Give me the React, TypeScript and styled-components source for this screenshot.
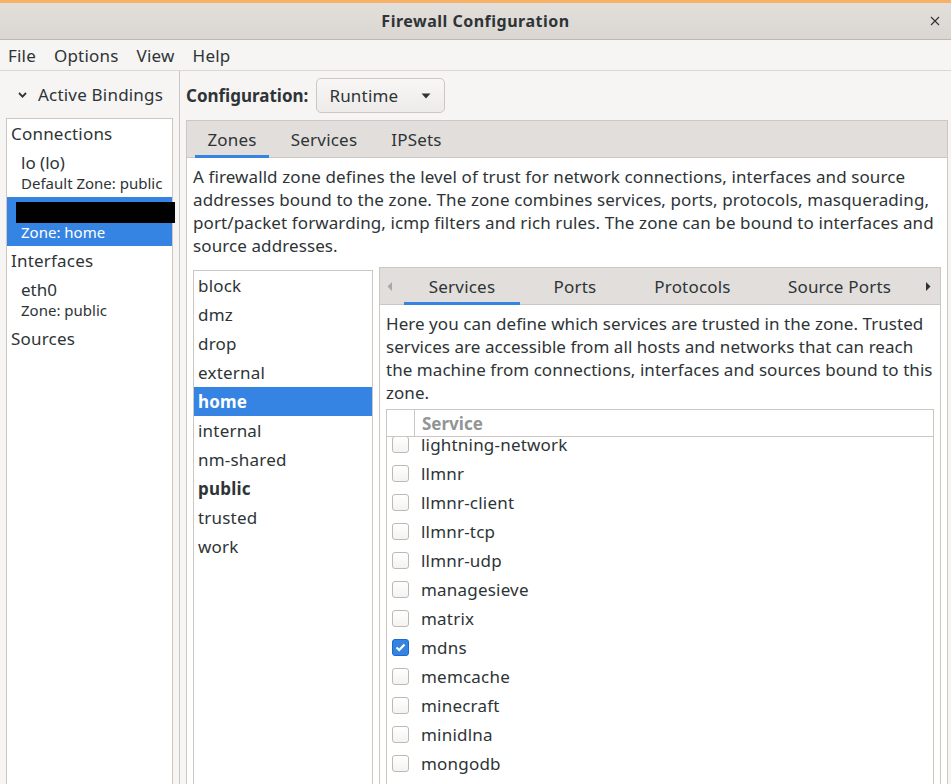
import styled, { createGlobalStyle } from "styled-components";

const GlobalStyle = createGlobalStyle`
  html, body {
    margin: 0;
    padding: 0;
  }
  body {
    background: #f6f5f4;
    font-family: "Noto Sans", "DejaVu Sans", sans-serif;
    font-size: 16px;
    color: #2e3436;
    overflow: hidden;
  }
`;

const blue = "#3584e4";
const border = "#cdc7c2";

const Window = styled.div`
  height: 784px;
  display: flex;
  flex-direction: column;
  overflow: hidden;
`;

const TopAccent = styled.div`
  height: 3px;
  background: #f8b166;
  flex: none;
`;

const TitleBar = styled.div`
  height: 36px;
  flex: none;
  display: grid;
  grid-template-columns: 1fr auto 1fr;
  align-items: center;
  background: linear-gradient(#e2dfdb, #dad6d2);
  border-bottom: 1px solid #bfb8b1;
`;

const Title = styled.div`
  grid-column: 2;
  font-weight: bold;
  font-size: 16px;
  letter-spacing: 0.5px;
`;

const CloseButton = styled.div`
  justify-self: end;
  margin-right: 10px;
  width: 12px;
  height: 12px;
  display: flex;
`;

const MenuBar = styled.div`
  height: 30px;
  flex: none;
  display: flex;
  align-items: center;
  padding-left: 8px;
  gap: 18px;
  border-bottom: 1px solid #dcd8d4;
  font-size: 17px;
  letter-spacing: 0.2px;
`;

const MenuItem = styled.span``;

const Main = styled.div`
  flex: 1;
  min-height: 0;
  display: flex;
`;

const Sidebar = styled.div`
  width: 179px;
  flex: none;
  border-right: 1px solid ${border};
  display: flex;
  flex-direction: column;
`;

const Expander = styled.div`
  height: 47px;
  display: flex;
  align-items: center;
  padding-left: 18px;
  gap: 11px;
  font-size: 17px;
  letter-spacing: 0.2px;
`;

const BindingsBox = styled.div`
  flex: 1;
  margin: 0 6px 0 6px;
  background: #fff;
  border: 1px solid ${border};
  border-bottom: none;
`;

const BindingHeader = styled.div`
  height: 29px;
  display: flex;
  align-items: center;
  padding-left: 4px;
  font-size: 17px;
  letter-spacing: 0.2px;
`;

const BindingItem = styled.div<{ $selected?: boolean }>`
  height: 49px;
  padding: 4px 0 3px 14px;
  box-sizing: border-box;
  background: ${(p) => (p.$selected ? blue : "transparent")};
  color: ${(p) => (p.$selected ? "#fff" : "inherit")};
  display: flex;
  flex-direction: column;
`;

const BindingName = styled.div`
  height: 21px;
  line-height: 21px;
  font-size: 17px;
`;

const BindingZone = styled.div`
  height: 21px;
  line-height: 21px;
  font-size: 15px;
`;

const Redacted = styled.div`
  width: 159px;
  height: 21px;
  margin: 1px 0 -1px -5px;
  background: #000;
  position: relative;
`;

const Content = styled.div`
  flex: 1;
  min-width: 0;
  display: flex;
  flex-direction: column;
  padding: 7px 3px 0 6px;
`;

const ConfigRow = styled.div`
  height: 35px;
  display: flex;
  align-items: center;
  gap: 8px;
  margin-bottom: 7px;
`;

const ConfigLabel = styled.span`
  font-weight: bold;
  font-size: 17px;
`;

const Dropdown = styled.div`
  width: 129px;
  height: 35px;
  box-sizing: border-box;
  border: 1px solid ${border};
  border-radius: 5px;
  background: linear-gradient(#f8f7f6, #edebe9);
  display: flex;
  align-items: center;
  justify-content: space-between;
  padding: 0 13px 0 12px;
  font-size: 17px;
  letter-spacing: 0.2px;
`;

const Notebook = styled.div`
  flex: 1;
  min-height: 0;
  min-width: 0;
  display: flex;
  flex-direction: column;
  border: 1px solid ${border};
  border-bottom: none;
  background: #fff;
`;

const TabBar = styled.div<{ $inset: number }>`
  height: 36px;
  flex: none;
  display: flex;
  align-items: stretch;
  gap: 9px;
  padding-left: ${(p) => p.$inset}px;
  background: #e1dedb;
  border-bottom: 1px solid ${border};
`;

const Tab = styled.div<{ $width: number; $active?: boolean }>`
  width: ${(p) => p.$width}px;
  flex: none;
  display: flex;
  align-items: center;
  justify-content: center;
  font-size: 17px;
  letter-spacing: 0.2px;
  box-sizing: border-box;
  border-bottom: 3px solid ${(p) => (p.$active ? blue : "transparent")};
  padding-top: 3px;
  margin-bottom: -1px;
`;

const ScrollArrow = styled.div<{ $enabled?: boolean }>`
  width: 10px;
  display: flex;
  align-items: center;
  justify-content: center;
  color: ${(p) => (p.$enabled ? "#2e3436" : "#a5a9aa")};
`;

const NotebookBody = styled.div`
  flex: 1;
  min-height: 0;
  display: flex;
  flex-direction: column;
  padding: 7px 6px 0;
`;

const Description = styled.p<{ $tracking: number }>`
  margin: 0;
  font-size: 17px;
  line-height: 23px;
  letter-spacing: ${(p) => p.$tracking}px;
  white-space: nowrap;
`;

const ZonePane = styled.div`
  flex: 1;
  min-height: 0;
  display: flex;
  gap: 6px;
  margin-top: 10px;
`;

const ZoneList = styled.div`
  width: 180px;
  flex: none;
  box-sizing: border-box;
  margin-top: 3px;
  border: 1px solid ${border};
  border-bottom: none;
  background: #fff;
`;

const ZoneRow = styled.div<{ $selected?: boolean; $bold?: boolean }>`
  height: 29px;
  display: flex;
  align-items: center;
  padding-left: 4px;
  font-size: 17px;
  letter-spacing: 0.2px;
  font-weight: ${(p) => (p.$selected || p.$bold ? "bold" : "normal")};
  background: ${(p) => (p.$selected ? blue : "transparent")};
  color: ${(p) => (p.$selected ? "#fff" : "inherit")};
`;

const InnerNotebook = styled(Notebook)``;

const ServiceTree = styled.div`
  flex: 1;
  min-height: 0;
  margin-top: 5px;
  border: 1px solid ${border};
  border-bottom: none;
  display: flex;
  flex-direction: column;
`;

const TreeHeader = styled.div`
  height: 26px;
  flex: none;
  display: grid;
  grid-template-columns: 28px 1fr;
  border-bottom: 1px solid ${border};
  position: relative;
  z-index: 1;
  background: #fff;
`;

const HeaderCell = styled.div<{ $divider?: boolean }>`
  display: flex;
  align-items: center;
  padding-left: 7px;
  font-weight: bold;
  font-size: 17px;
  color: #929595;
  border-right: ${(p) => (p.$divider ? `1px solid ${border}` : "none")};
`;

const TreeBody = styled.div`
  flex: 1;
  overflow: hidden;
`;

const TreeRows = styled.div`
  margin-top: -7px;
`;

const ServiceRow = styled.div`
  height: 29px;
  display: grid;
  grid-template-columns: 29px 1fr;
  align-items: center;
  font-size: 17px;
  letter-spacing: 0.2px;
`;

const CheckBox = styled.div<{ $checked?: boolean }>`
  width: 17px;
  height: 17px;
  box-sizing: border-box;
  margin-left: 5px;
  border-radius: 3px;
  border: 1px solid ${(p) => (p.$checked ? "#1b6acb" : "#bfb9b3")};
  background: ${(p) => (p.$checked ? blue : "linear-gradient(#ffffff, #f4f3f2)")};
  display: flex;
  align-items: center;
  justify-content: center;
`;

const ServiceName = styled.span`
  padding-left: 5px;
`;

const zones = ["block", "dmz", "drop", "external", "home", "internal", "nm-shared", "public", "trusted", "work"];

const services = [
  "lightning-network",
  "llmnr",
  "llmnr-client",
  "llmnr-tcp",
  "llmnr-udp",
  "managesieve",
  "matrix",
  "mdns",
  "memcache",
  "minecraft",
  "minidlna",
  "mongodb",
  "mosh",
];

const outerTabs = [
  { label: "Zones", width: 74 },
  { label: "Services", width: 92 },
  { label: "IPSets", width: 75 },
];

const innerTabs = [
  { label: "Services", width: 116 },
  { label: "Ports", width: 92 },
  { label: "Protocols", width: 125 },
  { label: "Source Ports", width: 151 },
];

function Chevron() {
  return (
    <svg width="9" height="6" viewBox="0 0 9 6">
      <polyline points="1,1 4.5,4.6 8,1" fill="none" stroke="#2e3436" strokeWidth="1.8" />
    </svg>
  );
}

function Triangle({ dir }: { dir: "left" | "right" | "down" }) {
  if (dir === "down") {
    return (
      <svg width="10" height="6" viewBox="0 0 10 6">
        <polygon points="0.5,0.5 9.5,0.5 5,5.5" fill="#2e3436" />
      </svg>
    );
  }
  const pts = dir === "left" ? "5,0 5,9 0.5,4.5" : "0,0 0,9 4.5,4.5";
  return (
    <svg width="6" height="9" viewBox="0 0 6 9">
      <polygon points={pts} fill="currentColor" />
    </svg>
  );
}

function Check() {
  return (
    <svg width="11" height="9" viewBox="0 0 11 9">
      <polyline points="1.5,4.5 4.2,7 9.5,1.5" fill="none" stroke="#fff" strokeWidth="2.2" />
    </svg>
  );
}

export default function App() {
  return (
    <>
      <GlobalStyle />
      <Window>
        <TopAccent />
        <TitleBar>
          <Title>Firewall Configuration</Title>
          <CloseButton>
            <svg width="12" height="12" viewBox="0 0 12 12">
              <path d="M2 2 L10 10 M10 2 L2 10" stroke="#2e3436" strokeWidth="1.1" />
            </svg>
          </CloseButton>
        </TitleBar>
        <MenuBar>
          <MenuItem>File</MenuItem>
          <MenuItem>Options</MenuItem>
          <MenuItem>View</MenuItem>
          <MenuItem>Help</MenuItem>
        </MenuBar>
        <Main>
          <Sidebar>
            <Expander>
              <Chevron />
              <span>Active Bindings</span>
            </Expander>
            <BindingsBox>
              <BindingHeader>Connections</BindingHeader>
              <BindingItem>
                <BindingName>lo (lo)</BindingName>
                <BindingZone>Default Zone: public</BindingZone>
              </BindingItem>
              <BindingItem $selected>
                <Redacted />
                <BindingZone>Zone: home</BindingZone>
              </BindingItem>
              <BindingHeader>Interfaces</BindingHeader>
              <BindingItem>
                <BindingName>eth0</BindingName>
                <BindingZone>Zone: public</BindingZone>
              </BindingItem>
              <BindingHeader>Sources</BindingHeader>
            </BindingsBox>
          </Sidebar>
          <Content>
            <ConfigRow>
              <ConfigLabel>Configuration:</ConfigLabel>
              <Dropdown>
                <span>Runtime</span>
                <Triangle dir="down" />
              </Dropdown>
            </ConfigRow>
            <Notebook>
              <TabBar $inset={8}>
                {outerTabs.map((t, i) => (
                  <Tab key={t.label} $width={t.width} $active={i === 0}>
                    {t.label}
                  </Tab>
                ))}
              </TabBar>
              <NotebookBody>
                <Description $tracking={0.1}>
                  A firewalld zone defines the level of trust for network connections, interfaces and source
                  <br />
                  addresses bound to the zone. The zone combines services, ports, protocols, masquerading,
                  <br />
                  port/packet forwarding, icmp filters and rich rules. The zone can be bound to interfaces and
                  <br />
                  source addresses.
                </Description>
                <ZonePane>
                  <ZoneList>
                    {zones.map((z) => (
                      <ZoneRow key={z} $selected={z === "home"} $bold={z === "public"}>
                        {z}
                      </ZoneRow>
                    ))}
                  </ZoneList>
                  <InnerNotebook>
                    <TabBar $inset={5}>
                      <ScrollArrow>
                        <Triangle dir="left" />
                      </ScrollArrow>
                      {innerTabs.map((t, i) => (
                        <Tab key={t.label} $width={t.width} $active={i === 0}>
                          {t.label}
                        </Tab>
                      ))}
                      <ScrollArrow $enabled>
                        <Triangle dir="right" />
                      </ScrollArrow>
                    </TabBar>
                    <NotebookBody>
                      <Description $tracking={0.05}>
                        Here you can define which services are trusted in the zone. Trusted
                        <br />
                        services are accessible from all hosts and networks that can reach
                        <br />
                        the machine from connections, interfaces and sources bound to this
                        <br />
                        zone.
                      </Description>
                      <ServiceTree>
                        <TreeHeader>
                          <HeaderCell $divider />
                          <HeaderCell>Service</HeaderCell>
                        </TreeHeader>
                        <TreeBody>
                          <TreeRows>
                            {services.map((s) => (
                              <ServiceRow key={s}>
                                <CheckBox $checked={s === "mdns"}>{s === "mdns" && <Check />}</CheckBox>
                                <ServiceName>{s}</ServiceName>
                              </ServiceRow>
                            ))}
                          </TreeRows>
                        </TreeBody>
                      </ServiceTree>
                    </NotebookBody>
                  </InnerNotebook>
                </ZonePane>
              </NotebookBody>
            </Notebook>
          </Content>
        </Main>
      </Window>
    </>
  );
}
